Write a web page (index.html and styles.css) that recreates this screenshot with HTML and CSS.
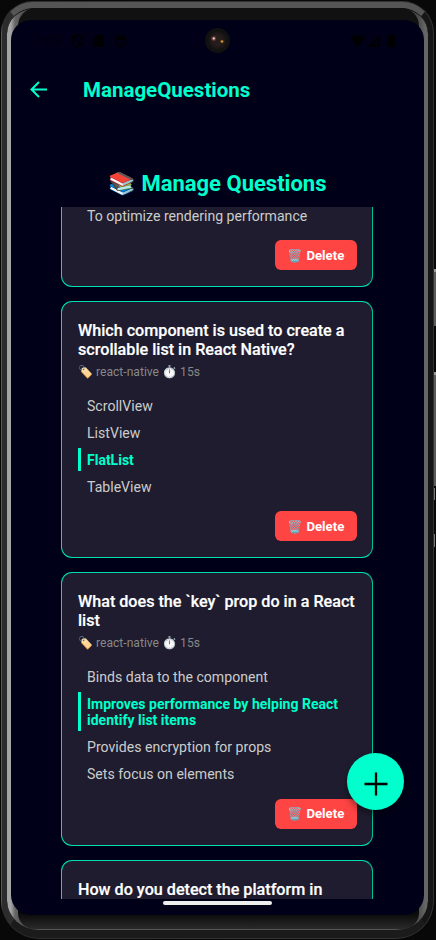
FILE: index.html
```html
<!DOCTYPE html>
<html lang="en">
<head>
<meta charset="utf-8">
<title>ManageQuestions</title>
<link rel="stylesheet" href="styles.css">
</head>
<body>
<div class="phone">
  <div class="rim"><div class="bezel">
    <div class="screen">
      <div class="status">
        <span class="clock">7:09</span>
        <svg class="sys" width="60" height="14" viewBox="0 0 60 14"><path d="M6.500 1l5 2v4c0 3-2 5-5 6-3-1-5-3-5-6V3zM2.500 3l8 8" fill="none" stroke="#000" stroke-width="1.500"/><path d="M26 1h7v12H23V4z"/><circle cx="50" cy="7" r="5" fill="none" stroke="#000" stroke-width="1.500"/><path d="M45 2h10v4H45z"/></svg>
        <span class="camera"></span>
        <svg class="signal" width="46" height="14" viewBox="0 0 46 14"><path d="M0 4q7.500-6 15 0L7.500 13zM17 13L30 1v12zM37 2h2V0h4v2h2v11h-8z"/><path d="M25 7v5h3V4z" fill="#000018"/></svg>
      </div>
      <header class="appbar">
        <svg class="back" width="18" height="18" viewBox="0 0 18 18"><path d="M17 8.500H2M9 1L1.500 8.500 9 16" fill="none" stroke="#00ffcc" stroke-width="2"/></svg>
        <span class="appbar-title">ManageQuestions</span>
      </header>
      <h1 class="heading"><span class="emoji">📚</span> Manage Questions</h1>
      <main class="list">
        <article class="card first">
          <p class="option">To optimize rendering performance</p>
          <button class="delete"><span class="emoji">🗑️</span> Delete</button>
        </article>
        <article class="card">
          <h2 class="question">Which component is used to create a scrollable list in React Native?</h2>
          <p class="meta"><span class="emoji">🏷️</span> react-native <span class="emoji">⏱️</span> 15s</p>
          <p class="option">ScrollView</p>
          <p class="option">ListView</p>
          <p class="option correct">FlatList</p>
          <p class="option">TableView</p>
          <button class="delete"><span class="emoji">🗑️</span> Delete</button>
        </article>
        <article class="card">
          <h2 class="question">What does the `key` prop do in a React list</h2>
          <p class="meta"><span class="emoji">🏷️</span> react-native <span class="emoji">⏱️</span> 15s</p>
          <p class="option">Binds data to the component</p>
          <p class="option correct">Improves performance by helping React identify list items</p>
          <p class="option">Provides encryption for props</p>
          <p class="option">Sets focus on elements</p>
          <button class="delete"><span class="emoji">🗑️</span> Delete</button>
        </article>
        <article class="card">
          <h2 class="question">How do you detect the platform in</h2>
        </article>
      </main>
      <div class="home"></div>
      <button class="fab" aria-label="Add"><svg width="24" height="24" viewBox="0 0 24 24"><path d="M12 .5v23M.5 12h23" fill="none" stroke="#000" stroke-width="2.300"/></svg></button>
    </div>
  </div></div>
  <span class="side-key power"></span>
  <span class="side-key volume"></span>
  <span class="tick upper"></span>
  <span class="tick lower"></span>
</div>
</body>
</html>
```

FILE: styles.css
```css
* { box-sizing: border-box; }
body { margin: 0; background: #080808; font-family: Roboto, "Noto Color Emoji", sans-serif; }
.phone { position: relative; width: 436px; height: 940px; padding: 1px 2px 1px 1px; overflow: hidden; }
.side-key { position: absolute; right: 0; width: 2px; background: #5c5c5c; border-top: 3px solid #999; }
.power { top: 269px; height: 57px; }
.volume { top: 372px; height: 114px; }
.tick { position: absolute; right: 1px; width: 1px; background: #777; }
.upper { top: 488px; height: 12px; }
.lower { top: 534px; height: 13px; }
.rim { height: 938px; border-radius: 32px 32px 38px 38px; padding: 1px; background: linear-gradient(90deg, #666, #2d2d2d 2px, #333 50%, #333); }
.bezel { height: 936px; border-radius: 31px 31px 37px 37px; border-style: solid; border-width: 6px 5px 8px 5px; border-color: #555 #161616 #1b1b1b #2c2c2c; padding: 12px 4px 15px 4px; background: linear-gradient(90deg, #a4a4a4 0 4px, #666 8px, #111 40px calc(100% - 30px), #555 calc(100% - 7px), #666 calc(100% - 3px)); background-clip: padding-box; box-shadow: inset 0 1px 0 #111, inset 0 -1px 0 #555; position: relative; }
.bezel::before, .bezel::after { content: ""; position: absolute; left: 11px; right: 9px; }
.bezel::before { top: 0; height: 28px; background: #111; border-radius: 18px 18px 0 0; }
.bezel::after { bottom: 1px; height: 32px; background: linear-gradient(#090909 50%, #2a2a2a); border-radius: 0 0 16px 16px; }
.screen { position: relative; z-index: 1; height: 895px; background: #000018; border-radius: 20px; overflow: hidden; }
.status { height: 42px; position: relative; display: flex; align-items: center; padding-left: 23px; }
.clock { font-size: 14.500px; width: 37px; color: #00000a; }
.status svg { opacity: .9; }
.signal { margin-left: auto; margin-right: 28px; }
.camera { position: absolute; left: 194px; top: 8px; width: 25px; height: 25px; border-radius: 50%; background: radial-gradient(circle at 35% 42%, #ddd 0 .5px, #75403a 1.500px, transparent 3px), radial-gradient(circle at 68% 54%, #d99432 0 .5px, transparent 2px), radial-gradient(circle, #261c1c 0 30%, #111 55%); }
.appbar { height: 56px; display: flex; align-items: center; padding-left: 19px; }
.appbar-title { margin-left: 35px; color: #00ffcc; font-weight: 700; font-size: 20.500px; }
.heading { margin: 32px 0 0; height: 57px; padding-top: 20px; text-align: center; font-size: 22px; line-height: 28px; color: #00ffcc; font-weight: 700; }
.list { height: 692px; padding: 0 51px 0 50px; overflow: hidden; }
.card { background: #1e1c2e; border: 1px solid #00dfb2; border-right-color: #00c29d; border-radius: 11px; padding: 18.700px 15px 16px 16px; margin-bottom: 14px; display: flex; flex-direction: column; }
.first { border-top: 0; border-radius: 0 0 11px 11px; padding-top: 0; height: 80px; }
.first .option { margin-top: -3.500px; }
.first .delete { margin-top: 9.500px; }
.question { margin: 0; color: #fff; font-size: 16.150px; line-height: 19px; font-weight: 500; -webkit-text-stroke: .2px #fff; }
.meta { margin: 5px 0 13px; color: #888; font-size: 12.100px; line-height: 17px; }
.option { margin: 0 0 4px; padding: 4px 0 3px 9px; color: #ccc; font-size: 14.100px; line-height: 16px; }
.correct { color: #00ffcc; font-weight: 700; font-size: 14px; border-left: 3px solid #00ffcc; padding-left: 6px; }
.delete { margin: 9.800px 0 0; align-self: flex-end; flex-shrink: 0; width: 82px; height: 30px; border: 0; border-radius: 6px; background: #ff4444; color: #fff; padding: 0; font: 700 13.200px Roboto, "Noto Color Emoji", sans-serif; }
.delete .emoji { font-size: 12.400px; }
.home { width: 109px; height: 4px; border-radius: 2px; background: #eee; margin: 2px auto 0; }
.fab { position: absolute; left: 336px; top: 733px; width: 57px; height: 57px; border: 0; border-radius: 50%; padding: 5px 0 0; background: #00ffcc; display: flex; align-items: center; justify-content: center; box-shadow: 0 4px 7px rgba(0,0,0,.4); }
```
